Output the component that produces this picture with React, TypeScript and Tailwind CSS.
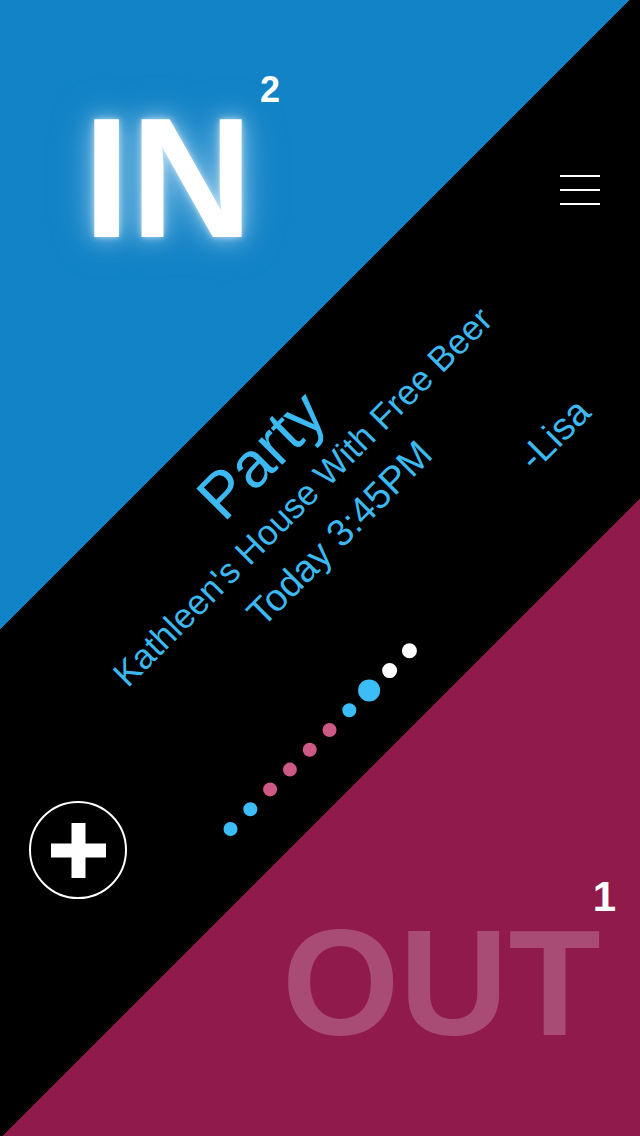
const dots = [
  { size: "w-[14px] h-[14px]", color: "bg-[#3dbdf7]" },
  { size: "w-[14px] h-[14px]", color: "bg-[#3dbdf7]" },
  { size: "w-[14px] h-[14px]", color: "bg-[#cf5986]" },
  { size: "w-[14px] h-[14px]", color: "bg-[#cf5986]" },
  { size: "w-[14px] h-[14px]", color: "bg-[#cf5986]" },
  { size: "w-[14px] h-[14px]", color: "bg-[#cf5986]" },
  { size: "w-[14px] h-[14px]", color: "bg-[#3dbdf7]" },
  { size: "w-[22px] h-[22px]", color: "bg-[#3dbdf7]" },
  { size: "w-[15px] h-[15px]", color: "bg-white" },
  { size: "w-[15px] h-[15px]", color: "bg-white" },
];

export default function App() {
  return (
    <div className="relative flex h-[1136px] w-[640px] flex-col overflow-hidden bg-[linear-gradient(135deg,#1183c6_445px,#000_445px,#000_805px,#901b4b_805px)] font-['Liberation_Sans',Arial,sans-serif]">
      {/* header: IN count + menu */}
      <header className="flex h-[387px] shrink-0 items-start justify-between pl-[83px] pr-[40px] pt-[72px]">
        <div className="flex items-start">
          <span className="mt-[21px] text-[170px] font-bold leading-[170px] text-white [text-shadow:0_0_6px_rgba(255,255,255,0.6),0_0_22px_rgba(220,240,255,0.6),0_0_44px_rgba(200,230,255,0.4)]">
            IN
          </span>
          <span className="ml-[7px] text-[36px] font-bold leading-[36px] text-white">2</span>
        </div>
        <button className="mt-[103px] flex flex-col gap-[12px]">
          <span className="block h-[2px] w-[40px] bg-white" />
          <span className="block h-[2px] w-[40px] bg-white" />
          <span className="block h-[2px] w-[40px] bg-white" />
        </button>
      </header>

      {/* event card, tilted along the stripe */}
      <div className="ml-[38px] flex h-[290px] w-[600px] shrink-0 -rotate-45 flex-col text-[#3bb9f0]">
        <div className="h-[72px] text-center text-[64px] leading-[72px]">Party</div>
        <div className="h-[46px] whitespace-nowrap text-center text-[35px] leading-[46px]">
          Kathleen's House With Free Beer
        </div>
        <div className="h-[58px] text-center text-[38px] leading-[58px]">Today 3:45PM</div>
        <div className="mt-[31px] h-[44px] pl-[481px] text-[38px] leading-[44px]">-Lisa</div>
        <div className="mt-[17px] flex h-[22px]">
          {dots.map((d, i) => (
            <div key={i} className="flex w-[28px] items-center justify-center">
              <span className={`block rounded-full ${d.size} ${d.color}`} />
            </div>
          ))}
        </div>
      </div>

      {/* footer: add button + OUT count */}
      <div className="mt-[124px] flex items-start justify-between pl-[29px] pr-[24px]">
        <button className="flex h-[98px] w-[98px] items-center justify-center rounded-full border-2 border-white">
          <svg width="55" height="55" viewBox="0 0 55 55" className="ml-[1px] mt-[1px]">
            <rect x="20.5" y="0" width="14" height="55" fill="#fff" />
            <rect x="0" y="20.5" width="55" height="14" fill="#fff" />
          </svg>
        </button>
        <div className="mt-[75px] flex items-start">
          <span className="mt-[31px] text-[151px] font-bold leading-[151px] text-[#a94c75]">
            OUT
          </span>
          <span className="ml-[-8px] text-[42px] font-bold leading-[42px] text-white">1</span>
        </div>
      </div>
    </div>
  );
}
